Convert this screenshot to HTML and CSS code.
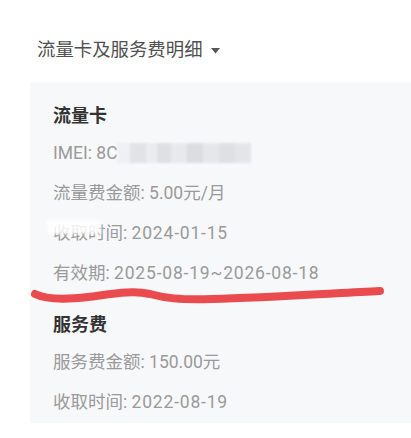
FILE: index.html
```html
<!DOCTYPE html>
<html lang="zh">
<head>
<meta charset="utf-8">
<link rel="stylesheet" href="styles.css">
</head>
<body>
<div class="page">
  <div class="header">
    <span class="header-text">流量卡及服务费明细</span>
    <svg class="caret" width="9" height="6" viewBox="0 0 9 6"><path d="M0 0 L9 0 L4.5 5.5 Z" fill="#555"/></svg>
  </div>
  <div class="card">
    <div class="section">
      <div class="sec-title">流量卡</div>
      <div class="row">IMEI: 8C<span class="mosaic"></span></div>
      <div class="row">流量费金额: 5.00元/月</div>
      <div class="row covered">收取时间: <span class="date">2024-01-15</span><span class="smudge"></span></div>
      <div class="row">有效期: <span class="date">2025-08-19~2026-08-18</span></div>
    </div>
    <div class="section second">
      <div class="sec-title">服务费</div>
      <div class="row">服务费金额: 150.00元</div>
      <div class="row">收取时间: <span class="date">2022-08-19</span></div>
    </div>
  </div>
  <svg class="scribble" width="411" height="438" viewBox="0 0 411 438">
    <path d="M35 294 C 45 299, 62 300, 88 297 C 112 294, 132 290, 150 294 C 165 298, 178 300, 212 299 C 262 298, 322 294, 380 291" fill="none" stroke="#e94b4e" stroke-width="8" stroke-linecap="round"/>
  </svg>
</div>
</body>
</html>
```
FILE: styles.css
```css
html, body {
  margin: 0;
  padding: 0;
  background: #ffffff;
}
.page {
  position: relative;
  width: 411px;
  height: 438px;
  overflow: hidden;
  font-family: Roboto, "Noto Sans CJK SC", "Noto Sans", sans-serif;
}
.header {
  display: flex;
  align-items: center;
  gap: 8px;
  height: 40px;
  padding: 30px 0 0 37px;
  box-sizing: content-box;
}
.header-text {
  font-size: 18.4px;
  color: #505050;
  line-height: 40px;
}
.caret {
  margin-top: 1px;
}
.card {
  margin: 12px 0 0 30px;
  background: #f7f8fa;
  padding: 17px 0 1px 23px;
}
.section.second {
  margin-top: 15px;
}
.sec-title {
  font-size: 18px;
  font-weight: 700;
  color: #333333;
  line-height: 34px;
  height: 34px;
}
.row {
  position: relative;
  font-size: 17.5px;
  color: #9a9a9a;
  line-height: 40px;
  height: 40px;
  white-space: nowrap;
}
.date {
  letter-spacing: 0.8px;
}
.mosaic {
  position: absolute;
  left: 64px;
  top: 10px;
  width: 134px;
  height: 20px;
  background:
    linear-gradient(90deg, #eef0f3 0 10%, #e2e3e6 10% 22%, #ebecef 22% 30%, #dfe0e3 30% 40%, #e8e9ec 40% 52%, #dcdde0 52% 64%, #e6e7ea 64% 76%, #dfe0e3 76% 88%, #e4e5e8 88% 100%);
  filter: blur(1px);
}
.smudge {
  position: absolute;
  left: -6px;
  top: 7px;
  width: 54px;
  height: 14px;
  background: rgba(255, 255, 255, 0.85);
  filter: blur(1.5px);
}
.scribble {
  position: absolute;
  left: 0;
  top: 0;
  pointer-events: none;
}
```
